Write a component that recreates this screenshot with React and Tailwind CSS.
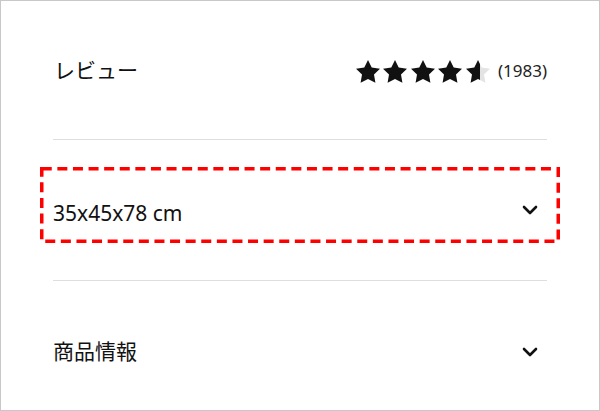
const STAR = 'M12 2l3.09 6.26L22 9.27l-5 4.87 1.18 6.88L12 17.77l-6.18 3.25L7 14.14 2 9.27l6.91-1.01L12 2z';

function Star({ fill = 1, id }) {
  return (
    <svg viewBox="2 2 20 19.1" className="w-[24px] h-[23px] shrink-0">
      <defs>
        <linearGradient id={id} x1="0" x2="1" y1="0" y2="0">
          <stop offset={fill} stopColor="#111111" />
          <stop offset={fill} stopColor="#e3e3e3" />
        </linearGradient>
      </defs>
      <path d={STAR} fill={`url(#${id})`} />
    </svg>
  );
}

function Chevron() {
  return (
    <svg viewBox="0 0 16 10" className="w-[16px] h-[10px] mr-[9px]" fill="none" stroke="#111111" strokeWidth="2.6" strokeLinecap="round" strokeLinejoin="round">
      <path d="M2 2l6 6 6-6" />
    </svg>
  );
}

// dashed focus ring drawn over the focused row
function FocusRing() {
  return (
    <svg viewBox="0 0 520 76" className="absolute -inset-[13px] w-[calc(100%+26px)] h-[calc(100%+26px)] pointer-events-none" fill="none">
      <rect x="1.75" y="1.75" width="516.5" height="72.5" stroke="#ff0000" strokeWidth="3.5" strokeDasharray="10 5.6" />
    </svg>
  );
}

export default function App() {
  const rating = [1, 1, 1, 1, 0.6];

  return (
    <div
      className="w-[600px] h-[411px] overflow-hidden bg-white border border-[#c8c8c8] px-[52px] text-[#111111]"
      style={{ fontFamily: '"Noto Sans", "Noto Sans CJK JP", sans-serif' }}
    >
      {/* レビュー */}
      <div className="h-[138px] flex items-center justify-between pt-[2px]">
        <span className="text-[21px] pl-[1px]">レビュー</span>
        <div className="flex items-center">
          <div className="flex items-center gap-[3.5px]">
            {rating.map((f, i) => (
              <Star key={i} fill={f} id={`star-${i}`} />
            ))}
          </div>
          <span className="ml-[8px] text-[17px] text-[#222222]">(1983)</span>
        </div>
      </div>
      <div className="h-px bg-[#dedede]" />

      {/* サイズ */}
      <div className="h-[140px] pt-[40px]">
        <button
          type="button"
          className="relative w-full h-[50px] pt-[10px] flex items-center justify-between outline-none"
        >
          <span className="text-[21px] leading-none pt-[6px]">35x45x78 cm</span>
          <Chevron />
          <FocusRing />
        </button>
      </div>
      <div className="h-px bg-[#dedede]" />

      {/* 商品情報 */}
      <div className="h-[140px] flex items-center justify-between pt-[1px]">
        <span className="text-[21px]">商品情報</span>
        <Chevron />
      </div>
    </div>
  );
}
